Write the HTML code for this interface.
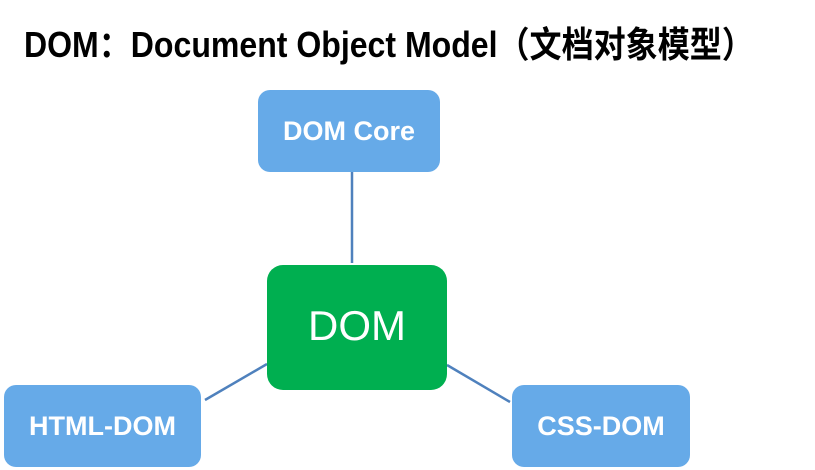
<!DOCTYPE html>
<html><head><meta charset="utf-8"><style>
body{margin:0;width:815px;height:470px;background:#fff;position:relative;overflow:hidden;font-family:"Liberation Sans","Noto Sans CJK SC",sans-serif}
.t{position:absolute;left:24px;top:16px;font-size:36px;font-weight:bold;color:#000;white-space:nowrap;transform:scaleX(0.89);transform-origin:0 0}
.b{position:absolute;background:#66aae8;border-radius:12px;color:#fff;font-weight:bold;font-size:27px;display:flex;align-items:center;justify-content:center}
.g{position:absolute;left:267px;top:265px;width:180px;height:125px;background:#00af50;border-radius:16px;color:#fff;font-size:42px;display:flex;align-items:center;justify-content:center;padding-bottom:4px;box-sizing:border-box}
svg{position:absolute;left:0;top:0}
</style></head><body>
<div class="t">DOM：Document Object Model（文档对象模型）</div>
<svg width="815" height="470"><g stroke="#4f81bd" stroke-width="2.5"><line x1="352" y1="172" x2="352" y2="263"/><line x1="205" y1="400" x2="267" y2="364"/><line x1="447" y1="365" x2="510" y2="402"/></g></svg>
<div class="b" style="left:258px;top:90px;width:182px;height:82px">DOM Core</div>
<div class="g">DOM</div>
<div class="b" style="left:4px;top:385px;width:197px;height:82px">HTML-DOM</div>
<div class="b" style="left:512px;top:385px;width:178px;height:82px">CSS-DOM</div>
</body></html>
